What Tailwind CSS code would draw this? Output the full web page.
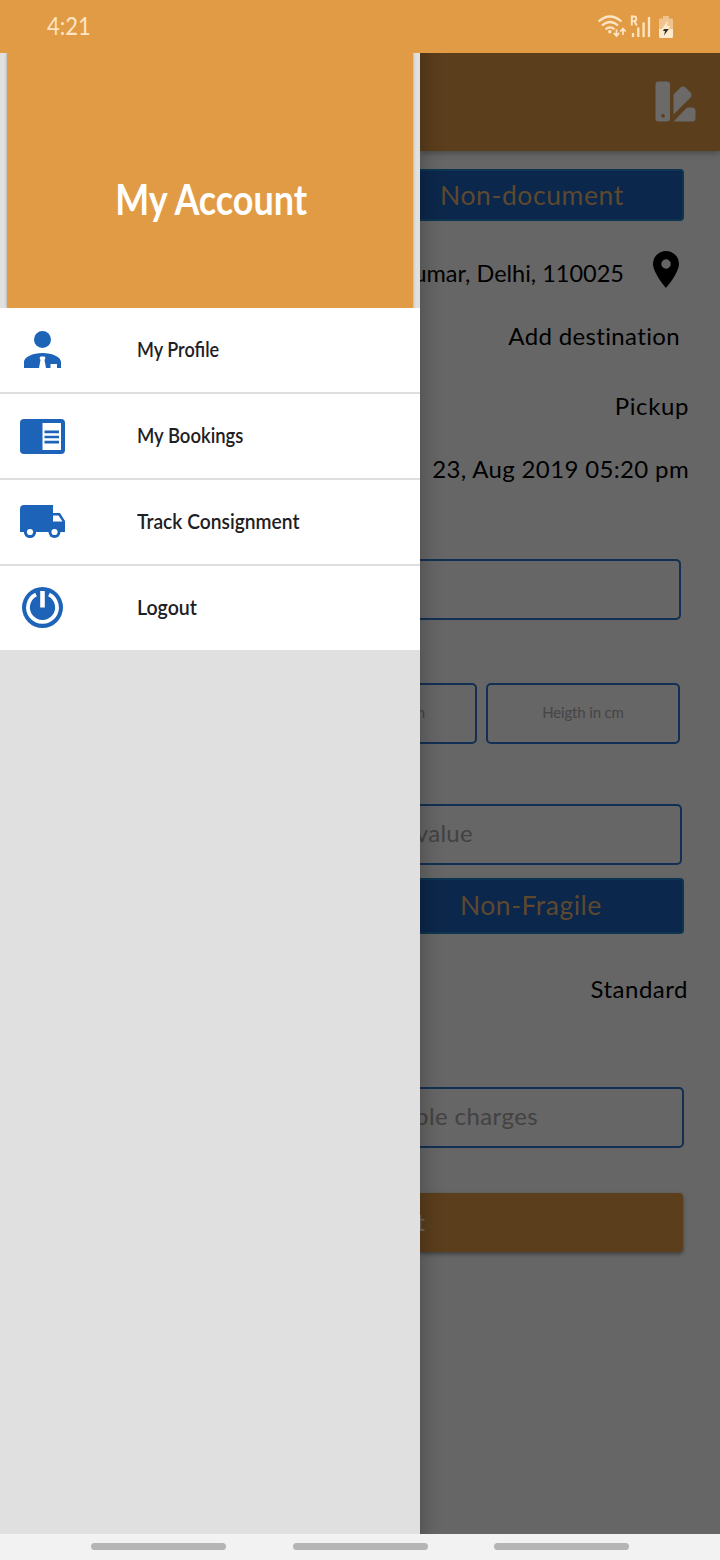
<!DOCTYPE html>
<html lang="en">
<head>
<meta charset="utf-8">
<title>My Account</title>
<script src="https://cdn.jsdelivr.net/npm/@tailwindcss/browser@4"></script>
</head>
<body class="w-[720px] h-[1560px] overflow-hidden flex flex-col font-['Lato','Liberation_Sans',sans-serif] text-black">

<!-- status bar -->
<header class="h-[53px] shrink-0 bg-[#e29b45] flex items-center justify-between pl-[47px] pr-[46px]">
  <span class="inline-block origin-left scale-x-[0.86] pb-[2px] text-[25.5px] leading-none text-[#fde5c3]">4:21</span>
  <svg class="w-[78px] h-[30px]" viewBox="596 12 78 30" fill="none" stroke="#fde5c3">
    <g stroke-width="2.2">
      <path d="M598.5 21.500Q610 11.500 621.500 21.500"/>
      <path d="M602 25.500Q610 18.500 618 25.500"/>
      <path d="M605.500 29.300Q610 25.300 614.500 29.300"/>
    </g>
    <circle cx="609.800" cy="31.700" r="1.700" fill="#fde5c3" stroke="none"/>
    <path stroke-width="1.700" d="M616.500 29.500v6.500M613.800 33l2.700 2.900 2.700-2.900M623 35v-6.500M620.300 31.500l2.700-2.900 2.700 2.900"/>
    <path stroke-width="1.900" d="M631.800 25.500V16.500h2.200a2.300 2.300 0 0 1 0 4.600h-2.200M634.300 21l2.500 4.500"/>
    <path stroke-width="2.300" d="M633 33v4M638.300 27.500v9.500M643.600 22.500v14.500M649 17v20"/>
    <path fill="#f0c48e" stroke="none" d="M663 16h6v2.500h2.500q1.500 0 1.500 1.500v9h-14v-9q0-1.500 1.500-1.500h2.500z"/>
    <path fill="#fdebd0" stroke="none" d="M659 29h14v7.500q0 1.500-1.500 1.500h-11q-1.500 0-1.500-1.500z"/>
    <path fill="#fdebd0" stroke="none" d="M667.800 20.500l-5.800 8.500h3.500h3l1.800-3h-3.300z"/>
    <path fill="#3b2f22" stroke="none" d="M664 29h4.800l-4.800 6.500 1-4.500h-2z"/>
  </svg>
</header>

<main class="h-[1481px] shrink-0 flex overflow-hidden">

  <!-- navigation drawer -->
  <aside class="w-[420px] shrink-0 bg-[#e0e0e0] text-[#1e2023] font-semibold">
    <div class="mx-[7px] h-[255px] bg-[#e29b45] shadow-[0_0_3px_rgba(0,0,0,0.3)] pt-[122px] pl-[2px] flex justify-center items-start">
      <h1 class="text-[42px] leading-[48px] font-bold text-white whitespace-nowrap scale-x-[0.855]">My Account</h1>
    </div>
    <nav class="relative bg-white">
      <a class="flex items-center h-[86px] border-b-2 border-[#dedede]">
        <svg class="ml-5 -mt-[2px] w-[45px] h-[45px]" viewBox="20 327 45 45" fill="#1d64b9">
          <circle cx="42.500" cy="339.500" r="8.500"/>
          <path d="M24 368v-6c0-5 8.500-9 18.500-9s18.500 4 18.500 9v6h-4v-4h-6.500v4z"/>
          <path fill="#fff" d="M40.500 356.500h4l1 1.500-1 2 1.500 8h-7l1.500-8-1-2z"/>
        </svg>
        <span class="ml-[72px] pb-[2px] text-[21.5px] whitespace-nowrap origin-left scale-x-[0.84]">My Profile</span>
      </a>
      <a class="flex items-center h-[86px] border-b-2 border-[#dedede]">
        <svg class="ml-5 w-[45px] h-[35px]" viewBox="0 0 45 35">
          <rect width="45" height="35" rx="4" fill="#1d64b9"/>
          <path fill="#fff" d="M22.500 4H41v27H22.500z"/>
          <path stroke="#1d64b9" stroke-width="2.700" d="M24.500 12.800H39M24.500 18H39M24.500 23.200H39"/>
        </svg>
        <span class="ml-[72px] pb-[2px] text-[21.5px] whitespace-nowrap origin-left scale-x-[0.86]">My Bookings</span>
      </a>
      <a class="flex items-center h-[86px] border-b-2 border-[#dedede]">
        <svg class="ml-5 -mt-[2px] w-[45px] h-[33px]" viewBox="0 0 45 33" fill="#1d64b9">
          <path d="M4 0h29v8h7l5 8v11h-5a6 6 0 0 1-11 0H16a6 6 0 0 1-12 0H0V4q0-4 4-4z"/>
          <circle cx="10" cy="27" r="6"/><circle cx="34.500" cy="27" r="6"/>
          <g fill="#fff"><circle cx="10" cy="27" r="3.100"/><circle cx="34.500" cy="27" r="3.100"/><path d="M33 10.500h5.500l4 6H33z"/></g>
        </svg>
        <span class="ml-[72px] pb-[2px] text-[21.5px] whitespace-nowrap origin-left scale-x-[0.895]">Track Consignment</span>
      </a>
      <a class="flex items-center h-[84px]">
        <svg class="ml-5 -mt-[2px] w-[45px] h-[41px]" viewBox="-22.500 -20.500 45 41">
          <circle r="20.500" fill="#1d64b9"/>
          <path fill="none" stroke="#fff" stroke-width="3.800" d="M-6.500-13A14.500 14.500 0 1 0 6.500-13"/>
          <path fill="#fff" d="M-2.300-16.500h4.600V0h-4.600z"/>
        </svg>
        <span class="ml-[72px] pb-[2px] text-[21.5px] whitespace-nowrap origin-left scale-x-[0.91]">Logout</span>
      </a>
    </nav>
  </aside>

  <!-- dimmed booking form behind the drawer -->
  <section class="relative w-[300px] bg-[#666666] overflow-hidden flex flex-col text-[23.5px] leading-[30px] whitespace-nowrap">
    <div class="h-[98px] shrink-0 bg-[#5b3e1c] shadow-[0_2px_6px_rgba(0,0,0,0.3)] flex justify-end items-center pr-6">
      <svg class="-mt-[1px] w-[41px] h-[41px]" viewBox="655 81 41 41" fill="#6b6a68">
        <path fill-rule="evenodd" d="M658.500 81.500h8.500q3 0 3 3v34q0 3-3 3h-8.500q-3 0-3-3v-34q0-3 3-3zM663 114a1.800 1.800 0 1 0 .1 0z"/>
        <path d="M673.500 94.500l7-7q2.500-2 5 0l5 5q2 2.500 0 5l-17 17z"/>
        <path d="M673.500 121.500l13.500-14h5q3.500 0 3.500 3.500v7q0 3.500-3.500 3.500z"/>
      </svg>
    </div>

    <div class="mt-[18px] mr-9 h-[52px] shrink-0 bg-[#0b274b] border-2 border-l-0 border-[#0d3450] rounded-r-[4px] flex items-center pl-[20px] text-[26.5px] tracking-[0.6px] text-[#5e492f]">Non-document</div>

    <div class="mt-[27px] mr-[41px] h-[50px] shrink-0 flex items-center justify-end gap-[29px]">
      <span>umar, Delhi, 110025</span>
      <svg class="-mt-[8px] w-[26px] h-[37px] shrink-0" viewBox="0 0 26 37"><path fill-rule="evenodd" d="M13 0a13 13 0 0 1 13 13C26 22 13 37 13 37S0 22 0 13A13 13 0 0 1 13 0zM13 8.300a4.700 4.700 0 1 0 .1 0z"/></svg>
    </div>
    <div class="mt-[23px] mr-[40px] text-right text-[24px] tracking-[0.35px]">Add destination</div>
    <div class="mt-[40px] mr-[31px] text-right text-[24px] tracking-[0.6px]">Pickup</div>
    <div class="mt-[33px] mr-[31px] text-right text-[24px] tracking-[0.35px]">23, Aug 2019 05:20 pm</div>

    <div class="mt-[75px] mr-[39px] h-[61px] shrink-0 border-2 border-l-0 border-[#142f54] rounded-r-[5px]"></div>

    <div class="mt-[63px] mr-[40px] h-[61px] shrink-0 flex gap-[9px] text-[15px] tracking-[-0.15px] text-[#454545]">
      <div class="w-[57px] border-2 border-l-0 border-[#142f54] rounded-r-[5px] flex items-center justify-end pb-[3px] pr-[50px] overflow-hidden"><span>Width in cm</span></div>
      <div class="flex-1 border-2 border-[#142f54] rounded-[5px] flex items-center justify-center pb-[3px]">Heigth in cm</div>
    </div>

    <div class="mt-[60px] mr-[38px] h-[61px] shrink-0 border-2 border-l-0 border-[#142f54] rounded-r-[5px] flex items-center justify-end pb-[3px] pr-[207px] text-[24px] tracking-[0.3px] text-[#424242]">value</div>

    <div class="mt-[13px] mr-9 h-[56px] shrink-0 bg-[#0b274b] border-2 border-l-0 border-[#0d3450] rounded-r-[4px] flex items-center pl-[40px] pb-[2px] text-[26.5px] tracking-[0.5px] text-[#5e492f]">Non-Fragile</div>

    <div class="mt-[40px] mr-[32px] text-right text-[24px] tracking-[0.5px]">Standard</div>

    <div class="mt-[83px] mr-9 h-[61px] shrink-0 border-2 border-l-0 border-[#142f54] rounded-r-[5px] flex items-center justify-end pb-[3px] pr-[144px] text-[24px] tracking-[0.4px] text-[#424242]">ble charges</div>

    <div class="mt-[45px] mr-[37px] h-[59px] shrink-0 bg-[#5b3e1c] rounded-r-[4px] shadow-[0_2px_4px_rgba(0,0,0,0.4)] flex items-center justify-end pb-[2px] pr-[258px] text-[#706860]">t</div>

    <!-- shadow cast by the drawer -->
    <div class="absolute inset-y-0 left-0 w-6 bg-linear-to-r from-black/15 via-black/5 to-transparent"></div>
  </section>
</main>

<!-- navigation bar -->
<footer class="h-[26px] shrink-0 bg-[#f2f2f2] flex items-center justify-between pl-[91px] pr-[91px] pb-[1px]">
  <i class="block w-[135px] h-[7px] rounded-full bg-[#b5b5b5]"></i>
  <i class="block w-[135px] h-[7px] rounded-full bg-[#b5b5b5]"></i>
  <i class="block w-[135px] h-[7px] rounded-full bg-[#b5b5b5]"></i>
</footer>
</body>
</html>
